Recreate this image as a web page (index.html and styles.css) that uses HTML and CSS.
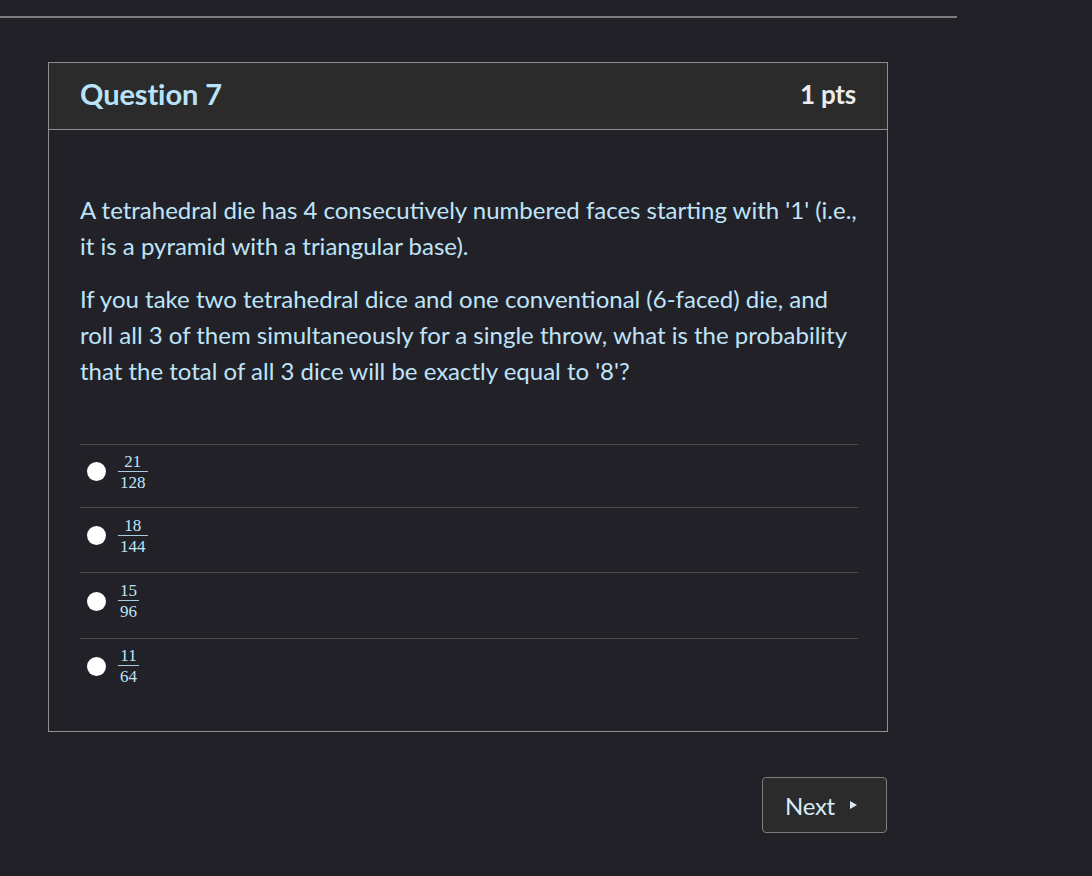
FILE: index.html
```html
<!DOCTYPE html>
<html>
<head>
<meta charset="utf-8">
<link rel="stylesheet" href="styles.css">
</head>
<body>
<div class="topline"></div>
<div class="card">
  <div class="card-header">
    <h2 class="q-title">Question 7</h2>
    <span class="pts">1 pts</span>
  </div>
  <div class="card-body">
    <p class="q-text">A tetrahedral die has 4 consecutively numbered faces starting with '1' (i.e., it is a pyramid with a triangular base).</p>
    <p class="q-text">If you take two tetrahedral dice and one conventional (6-faced) die, and roll all 3 of them simultaneously for a single throw, what is the probability that the total of all 3 dice will be exactly equal to '8'?</p>
    <div class="answers">
      <label class="answer"><span class="radio"></span><span class="frac"><span class="num">21</span><span class="den">128</span></span></label>
      <label class="answer"><span class="radio"></span><span class="frac"><span class="num">18</span><span class="den">144</span></span></label>
      <label class="answer"><span class="radio"></span><span class="frac"><span class="num">15</span><span class="den">96</span></span></label>
      <label class="answer"><span class="radio"></span><span class="frac"><span class="num">11</span><span class="den">64</span></span></label>
    </div>
  </div>
</div>
<div class="nav">
  <button class="next">Next <span class="tri"></span></button>
</div>
</body>
</html>
```
FILE: styles.css
```css
html, body {
  margin: 0;
  padding: 0;
  background: #222127;
  font-family: Lato, "Noto Sans", sans-serif;
}
body {
  width: 1092px;
  height: 876px;
  overflow: hidden;
}
.topline {
  margin-top: 16px;
  width: 957px;
  height: 2px;
  background: #7d7d80;
}
.card {
  margin: 44px 0 0 48px;
  width: 838px;
  border: 1px solid #8e8e90;
}
.card-header {
  background: #2b2b2b;
  border-bottom: 1px solid #8e8e90;
  display: flex;
  align-items: center;
  justify-content: space-between;
  padding: 0 31px 5px 31px;
  box-sizing: border-box;
  height: 67px;
}
.q-title {
  margin: 0;
  font-size: 29px;
  font-weight: 700;
  color: #b9e3fa;
  letter-spacing: -0.1px;
}
.pts {
  font-size: 26px;
  font-weight: 700;
  color: #ececec;
  letter-spacing: -0.2px;
}
.card-body {
  padding: 62px 29px 29px 31px;
}
.q-text {
  margin: 0 0 17px 0;
  font-size: 24px;
  line-height: 36px;
  color: #bfe4fa;
}
.answers {
  margin-top: 55px;
}
.answer {
  display: flex;
  align-items: center;
  height: 64px;
  box-sizing: border-box;
  border-top: 1px solid #4c4c50;
  padding: 0 0 9px 7px;
}
.answer:nth-child(1) { height: 63px; }
.answer:nth-child(2) { height: 65px; }
.answer:nth-child(3) { height: 66px; }
.radio {
  width: 19px;
  height: 19px;
  border-radius: 50%;
  background: #ffffff;
  margin-right: 12px;
}
.frac {
  display: inline-flex;
  flex-direction: column;
  align-items: center;
  font-family: "Liberation Serif", "DejaVu Serif", serif;
  font-size: 17px;
  line-height: 15px;
  color: #bfe4fa;
}
.frac .num {
  padding: 0 2px 2px;
  border-bottom: 1.5px solid #a9cde0;
  align-self: stretch;
  text-align: center;
}
.frac .den {
  padding: 3px 2px 0;
}
.nav {
  width: 887px;
  display: flex;
  justify-content: flex-end;
  margin-top: 45px;
}
.next {
  width: 125px;
  height: 56px;
  background: #2b2b2b;
  border: 1px solid #7d7d80;
  border-radius: 4px;
  color: #d6ebf7;
  font-family: Lato, "Noto Sans", sans-serif;
  font-size: 24px;
  letter-spacing: -0.3px;
  display: flex;
  align-items: center;
  justify-content: center;
  gap: 15px;
  padding: 0 7px 0 0;
}
.tri {
  width: 0;
  height: 0;
  border-top: 4.5px solid transparent;
  border-bottom: 4.5px solid transparent;
  border-left: 7px solid #d6ebf7;
}
```
